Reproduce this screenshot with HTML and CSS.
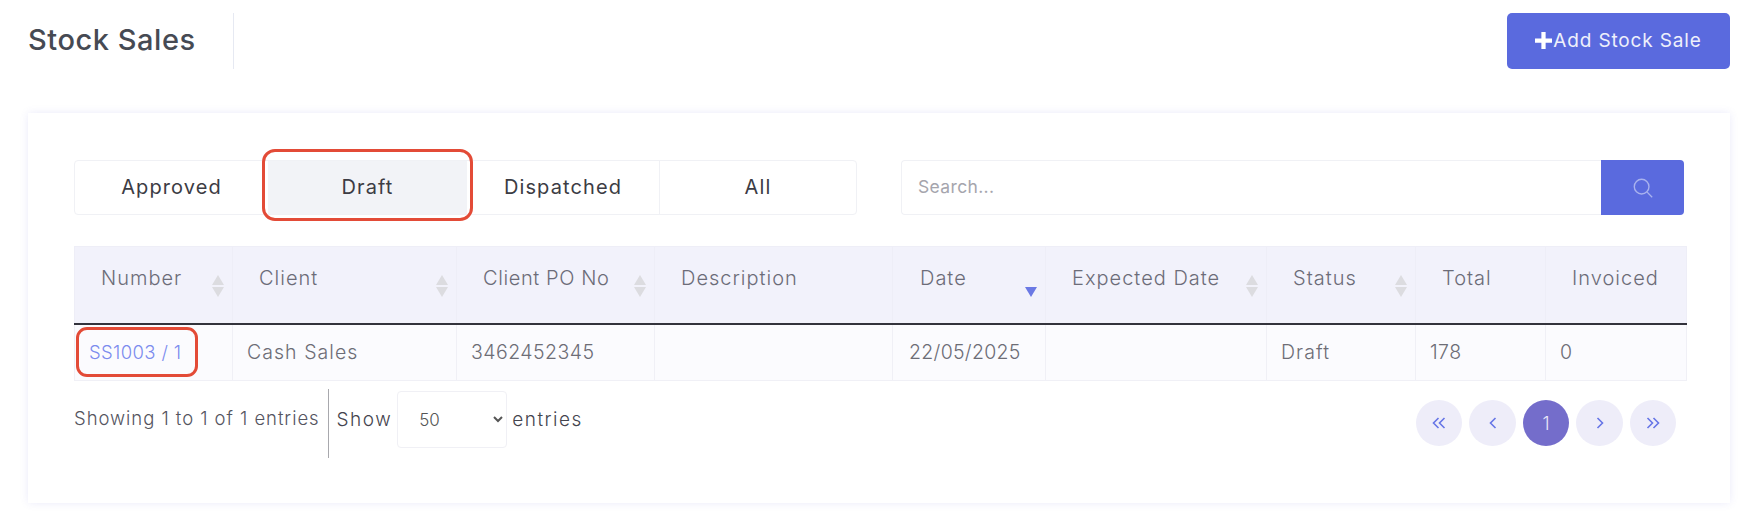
FILE: index.html
```html
<!DOCTYPE html>
<html lang="en">
<head>
<meta charset="utf-8">
<title>Stock Sales</title>
<link rel="stylesheet" href="styles.css">
</head>
<body>
<header class="top">
  <h1 class="title">Stock Sales</h1>
  <button class="add-btn"><svg class="plus" viewBox="0 0 16 16"><path d="M6 0h4v6h6v4h-6v6H6v-6H0V6h6z"/></svg>Add Stock Sale</button>
</header>
<main class="card">
  <div class="filters">
    <div class="tabs">
      <div class="tab tab-approved">Approved</div>
      <div class="tab tab-draft">Draft<span class="mark mark-draft"></span></div>
      <div class="tab tab-dispatched">Dispatched</div>
      <div class="tab tab-all">All</div>
    </div>
    <div class="search">
      <input class="search-input" placeholder="Search...">
      <button class="search-btn"><svg viewBox="0 0 24 24" class="search-icon"><circle cx="10.5" cy="10.5" r="8"/><path d="M16.5 16.5L22 22"/></svg></button>
    </div>
  </div>
  <table class="grid">
    <colgroup>
      <col class="c1"><col class="c2"><col class="c3"><col class="c4"><col class="c5"><col class="c6"><col class="c7"><col class="c8"><col class="c9">
    </colgroup>
    <thead>
      <tr>
        <th class="sortable">Number</th>
        <th class="sortable">Client</th>
        <th class="sortable cpo">Client PO No</th>
        <th>Description</th>
        <th class="sorted date">Date</th>
        <th class="sortable">Expected Date</th>
        <th class="sortable">Status</th>
        <th>Total</th>
        <th>Invoiced</th>
      </tr>
    </thead>
    <tbody>
      <tr>
        <td class="num"><a class="link">SS1003 / 1</a><span class="mark mark-num"></span></td>
        <td class="word">Cash Sales</td>
        <td>3462452345</td>
        <td></td>
        <td class="date">22/05/2025</td>
        <td></td>
        <td class="word">Draft</td>
        <td>178</td>
        <td>0</td>
      </tr>
    </tbody>
  </table>
  <div class="foot">
    <div class="info">
      <span class="showing">Showing 1 to 1 of 1 entries</span>
      <span class="length">Show
        <select class="size"><option>50</option></select>
        entries</span>
    </div>
    <nav class="pager">
      <a class="pg"><svg class="chev dbl" viewBox="0 0 14 12"><path d="M6.5 1L1.5 6l5 5M12.5 1l-5 5 5 5"/></svg></a>
      <a class="pg pg-w"><svg class="chev" viewBox="0 0 8 12"><path d="M6.5 1L1.5 6l5 5"/></svg></a>
      <a class="pg on">1</a>
      <a class="pg pg-w"><svg class="chev" viewBox="0 0 8 12"><path d="M1.5 1l5 5-5 5"/></svg></a>
      <a class="pg"><svg class="chev dbl" viewBox="0 0 14 12"><path d="M1.5 1l5 5-5 5M7.5 1l5 5-5 5"/></svg></a>
    </nav>
  </div>
</main>
</body>
</html>
```
FILE: styles.css
```css
* { box-sizing: border-box; }
html, body { margin: 0; padding: 0; background: #fff; }
body { font-family: "Inter", "Liberation Sans", sans-serif; color: #6a6a75; height: 529px; overflow: hidden; }

.top { display: flex; justify-content: space-between; align-items: flex-start; padding: 13px 10px 0 28px; height: 113px; }
.title { margin: 0; width: 206px; height: 56px; line-height: 54px; font-size: 29px; font-weight: 500; letter-spacing: .55px; color: #464a53; border-right: 1px solid #e6e9f2; }
.add-btn { display: flex; align-items: center; justify-content: center; width: 223px; height: 56px; border: 0; border-radius: 5px; background: #5a6ade; color: #eef0fb; font: 400 19px "Inter", sans-serif; letter-spacing: .85px; padding: 0 0 2px; }
.plus { width: 17px; height: 17px; fill: #fff; margin-right: 1px; }

.card { margin: 0 10px 0 28px; height: 390px; background: #fff; box-shadow: 0 0 8px rgba(100,100,220,.13); padding: 47px 46px 0; }
.filters { display: flex; justify-content: space-between; }
.tabs { display: flex; width: 783px; height: 55px; border: 1px solid #f0f1f5; border-radius: 4px; }
.tab { position: relative; display: flex; align-items: center; justify-content: center; padding-bottom: 2px; font-size: 20px; letter-spacing: 1.1px; color: #3c3c44; }
.tab-approved { width: 193px; }
.tab-draft { width: 199px; background: #f2f3f7; }
.tab-dispatched { width: 193px; border-right: 1px solid #f0f1f5; }
.tab-all { flex: 1; }
.mark { position: absolute; border: 3px solid #e34b37; border-radius: 13px; pointer-events: none; }
.mark-draft { left: -6px; right: -6px; top: -12px; bottom: -7px; }

.search { display: flex; width: 783px; height: 55px; }
.search-input { flex: 1; min-width: 0; border: 1px solid #f0f1f5; border-right: 0; border-radius: 4px 0 0 4px; padding: 0 16px 2px; font: 400 17.5px "Inter", sans-serif; letter-spacing: .35px; color: #888; outline: 0; }
.search-input::placeholder { color: #a5a5ad; }
.search-btn { width: 83px; border: 0; padding: 0; background: #5a6ade; border-radius: 0 4px 4px 0; display: flex; align-items: center; justify-content: center; }
.search-icon { width: 22px; height: 22px; fill: none; stroke: #a9b2ee; stroke-width: 1.5; }

.grid { width: 1612px; margin-top: 31px; table-layout: fixed; border-collapse: collapse; border: 1px solid #f0f1f6; }
.c1 { width: 158px; } .c2 { width: 224px; } .c3 { width: 198px; } .c4 { width: 238px; } .c5 { width: 153px; } .c6 { width: 221px; } .c7 { width: 149px; } .c8 { width: 130px; } .c9 { width: 141px; }
th { position: relative; height: 77px; padding: 0 0 14px 26px; text-align: left; font-size: 20px; font-weight: 300; letter-spacing: 1px; color: #6c6c78; background: #f2f2fb; border: 1px solid #eeeef7; border-bottom: 2px solid #33333c; }
th.cpo { letter-spacing: .6px; }
th.date { padding-left: 27px; }
td { position: relative; height: 57px; padding: 0 0 0 14px; font-size: 19.5px; font-weight: 300; letter-spacing: .45px; color: #6d6d76; background: #fbfbfe; border: 1px solid #f0f0f6; }
td.word { letter-spacing: 1.05px; }
td.date { padding-left: 16px; letter-spacing: .3px; }
th.sortable::before, th.sortable::after { content: ""; position: absolute; right: 8px; border-left: 6.5px solid transparent; border-right: 6.5px solid transparent; }
th.sortable::before { top: 28px; border-bottom: 10px solid #dcdce0; }
th.sortable::after { top: 40px; border-top: 10px solid #dcdce0; }
th.sorted::after { content: ""; position: absolute; right: 8px; top: 40px; border-left: 6.5px solid transparent; border-right: 6.5px solid transparent; border-top: 10px solid #6b79e4; }
.link { color: #7b8bee; font-size: 18.5px; letter-spacing: .35px; }
.mark-num { left: 1px; top: 2px; width: 122px; height: 50px; border-radius: 11px; }

.foot { display: flex; justify-content: space-between; }
.info { display: flex; align-items: flex-start; height: 79px; }
.showing { margin-top: 8px; padding-right: 8px; border-right: 1px solid #a8a8ad; height: 69px; line-height: 58px; font-size: 18.5px; font-weight: 300; letter-spacing: .95px; color: #55555f; }
.length { padding: 10px 0 0 8px; font-size: 19px; font-weight: 300; letter-spacing: 1.5px; color: #44444e; display: flex; align-items: center; gap: 5px; }
.size { width: 110px; height: 57px; border: 1px solid #f0f0f5; border-radius: 4px; background: #fff; padding: 0 17px; font: 300 17px "Inter", sans-serif; color: #555; letter-spacing: 0; }
.pager { display: flex; gap: 7px; padding: 19px 8px 0 0; }
.pg { width: 46px; height: 46px; border-radius: 50%; background: #eeedf9; display: flex; align-items: center; justify-content: center; }
.pg-w { width: 47px; }
.on { background: #746dcb; color: #e8e8f8; font-size: 18px; font-weight: 300; }
.chev { width: 8px; height: 12px; fill: none; stroke: #6675e6; stroke-width: 1.6; }
.dbl { width: 14px; }
```
